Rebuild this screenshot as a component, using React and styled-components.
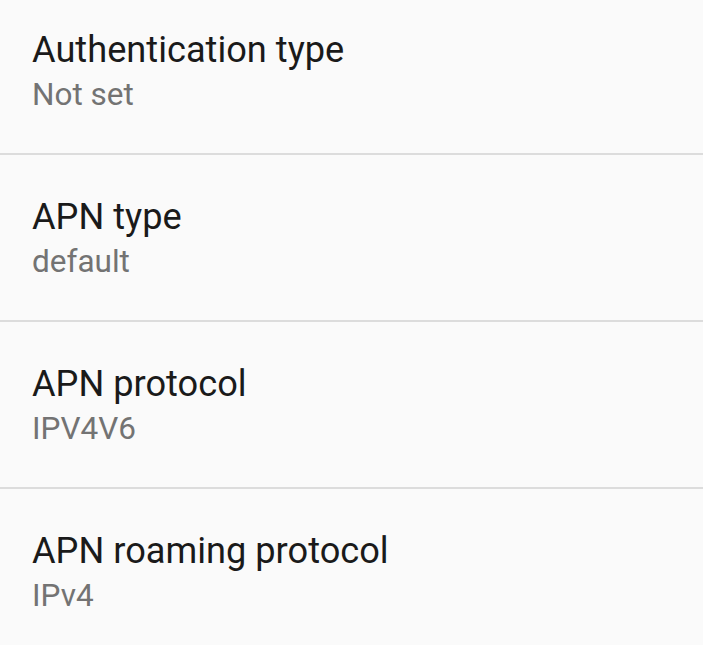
import React from "react";
import styled, { createGlobalStyle } from "styled-components";

const GlobalStyle = createGlobalStyle`
  html, body {
    margin: 0;
    padding: 0;
    background: #fafafa;
  }
  body {
    font-family: Roboto, "Noto Sans", "Liberation Sans", sans-serif;
    -webkit-font-smoothing: antialiased;
  }
`;

const Screen = styled.div`
  width: 703px;
  height: 645px;
  overflow: hidden;
  background: #fafafa;
  display: flex;
  flex-direction: column;
`;

const PrefRow = styled.div`
  display: flex;
  flex-direction: column;
  padding: ${(p) => (p.$first ? "30px" : "42px")} 32px 40px;
  border-bottom: 2px solid #dcdcdc;
  flex-shrink: 0;
`;

const Title = styled.div`
  font-size: 36.2px;
  line-height: 40px;
  color: #1a1a1a;
  white-space: nowrap;
`;

const Summary = styled.div`
  margin-top: 7px;
  font-size: 31.5px;
  line-height: 36px;
  color: #737373;
  white-space: nowrap;
`;

const prefs = [
  { title: "Authentication type", summary: "Not set" },
  { title: "APN type", summary: "default" },
  { title: "APN protocol", summary: "IPV4V6" },
  { title: "APN roaming protocol", summary: "IPv4" },
];

export default function App() {
  return (
    <>
      <GlobalStyle />
      <Screen>
        {prefs.map((p, i) => (
          <PrefRow key={p.title} $first={i === 0}>
            <Title>{p.title}</Title>
            <Summary>{p.summary}</Summary>
          </PrefRow>
        ))}
      </Screen>
    </>
  );
}
